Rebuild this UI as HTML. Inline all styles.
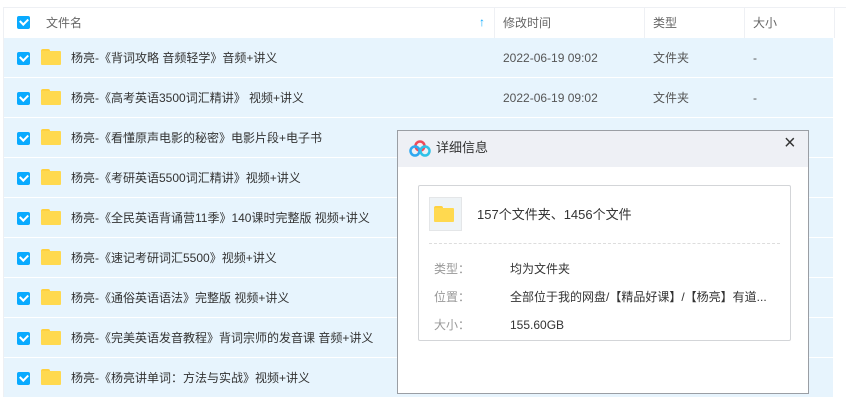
<!DOCTYPE html><html><head><meta charset="utf-8"><style>
*{margin:0;padding:0;box-sizing:border-box}
body{width:846px;height:408px;background:#fff;position:relative;overflow:hidden;font-family:"Liberation Sans","Noto Sans CJK SC",sans-serif;font-size:12px;line-height:16px;color:#333}
.a{position:absolute}
.hdr{left:4px;top:7px;width:842px;height:31px;border-top:1px solid #eef0f4;background:#fff;color:#666}
.row{position:absolute;left:4px;width:829px;height:39px;background:#e7f4fd}
.cb{position:absolute;width:13px;height:13px;background:#09aaff;border-radius:2px}
.cb:after{content:"";position:absolute;left:3px;top:2px;width:6px;height:4px;border-left:2px solid #fff;border-bottom:2px solid #fff;transform:rotate(-45deg)}
.fd{position:absolute;width:20px;height:16px}
.fd:before{content:"";position:absolute;left:0;top:0;width:9px;height:4px;background:#ffd13f;border-radius:2px 2px 0 0}
.fd:after{content:"";position:absolute;left:0;top:2px;width:20px;height:14px;background:#ffd94f;border-radius:1px}
.t{position:absolute;top:12px;white-space:nowrap}
.g{color:#555}
.sep{position:absolute;top:0;width:1px;height:30px;background:#eef0f4}
</style></head><body>
<div class="a" style="left:3px;top:7px;width:1px;height:390px;background:#eef0f4"></div>
<div class="a hdr">
<div class="cb" style="left:13px;top:8px"></div>
<div class="t" style="left:42px;top:7px">文件名</div>
<div class="a" style="left:475px;top:6px;color:#09aaff;font-weight:bold">↑</div>
<div class="sep" style="left:490px"></div>
<div class="t" style="left:499px;top:7px">修改时间</div>
<div class="sep" style="left:640px"></div>
<div class="t" style="left:649px;top:7px">类型</div>
<div class="sep" style="left:740px"></div>
<div class="t" style="left:749px;top:7px">大小</div>
<div class="sep" style="left:830px"></div>
</div>
<div class="row" style="top:38px"><div class="cb" style="left:13px;top:14px"></div><div class="fd" style="left:37px;top:11px"></div><div class="t" style="left:67px">杨亮-《背词攻略 音频轻学》音频+讲义</div><div class="t g" style="left:499px">2022-06-19 09:02</div><div class="t g" style="left:649px">文件夹</div><div class="t g" style="left:749px">-</div></div>
<div class="row" style="top:78px"><div class="cb" style="left:13px;top:14px"></div><div class="fd" style="left:37px;top:11px"></div><div class="t" style="left:67px">杨亮-《高考英语3500词汇精讲》 视频+讲义</div><div class="t g" style="left:499px">2022-06-19 09:02</div><div class="t g" style="left:649px">文件夹</div><div class="t g" style="left:749px">-</div></div>
<div class="row" style="top:118px"><div class="cb" style="left:13px;top:14px"></div><div class="fd" style="left:37px;top:11px"></div><div class="t" style="left:67px">杨亮-《看懂原声电影的秘密》电影片段+电子书</div></div>
<div class="row" style="top:158px"><div class="cb" style="left:13px;top:14px"></div><div class="fd" style="left:37px;top:11px"></div><div class="t" style="left:67px">杨亮-《考研英语5500词汇精讲》视频+讲义</div></div>
<div class="row" style="top:198px"><div class="cb" style="left:13px;top:14px"></div><div class="fd" style="left:37px;top:11px"></div><div class="t" style="left:67px">杨亮-《全民英语背诵营11季》140课时完整版 视频+讲义</div></div>
<div class="row" style="top:238px"><div class="cb" style="left:13px;top:14px"></div><div class="fd" style="left:37px;top:11px"></div><div class="t" style="left:67px">杨亮-《速记考研词汇5500》视频+讲义</div></div>
<div class="row" style="top:278px"><div class="cb" style="left:13px;top:14px"></div><div class="fd" style="left:37px;top:11px"></div><div class="t" style="left:67px">杨亮-《通俗英语语法》完整版 视频+讲义</div></div>
<div class="row" style="top:318px"><div class="cb" style="left:13px;top:14px"></div><div class="fd" style="left:37px;top:11px"></div><div class="t" style="left:67px">杨亮-《完美英语发音教程》背词宗师的发音课 音频+讲义</div></div>
<div class="row" style="top:358px"><div class="cb" style="left:13px;top:14px"></div><div class="fd" style="left:37px;top:11px"></div><div class="t" style="left:67px">杨亮-《杨亮讲单词：方法与实战》视频+讲义</div></div>

<div class="a" style="left:397px;top:130px;width:412px;height:264px;background:#fff;border:1px solid #9a9ea4">
<div class="a" style="left:0;top:0;width:410px;height:36px;background:#eef0f5"></div>
<svg class="a" style="left:11px;top:9px" width="22" height="17" viewBox="0 0 22 17"><circle cx="11" cy="6" r="4.5" fill="none" stroke="#f04a5a" stroke-width="2.5"/><circle cx="6" cy="11" r="4.5" fill="none" stroke="#2fa8f0" stroke-width="2.5"/><circle cx="16" cy="11" r="4.5" fill="none" stroke="#2fc2e8" stroke-width="2.5"/></svg>
<div class="a" style="left:38px;top:9px;font-size:13px;color:#333">详细信息</div>
<div class="a" style="left:386px;top:2px;font-size:20px;line-height:20px;color:#333">×</div>
<div class="a" style="left:20px;top:54px;width:373px;height:156px;border:1px solid #d3d5d8;border-radius:2px">
<div class="a" style="left:10px;top:11px;width:33px;height:34px;border:1px solid #e4e6e8;background:#eef3f6"></div>
<div class="fd" style="left:15px;top:20px;width:24px;height:18px"></div>
<div class="a" style="left:58px;top:21px;font-size:13px;color:#333">157个文件夹、1456个文件</div>
<div class="a" style="left:10px;top:57px;width:351px;border-top:1px dashed #ddd"></div>
<div class="a" style="left:15px;top:75px;color:#999">类型：</div><div class="a" style="left:91px;top:75px">均为文件夹</div>
<div class="a" style="left:15px;top:103px;color:#999">位置：</div><div class="a" style="left:91px;top:103px">全部位于我的网盘/【精品好课】/【杨亮】有道...</div>
<div class="a" style="left:15px;top:131px;color:#999">大小：</div><div class="a" style="left:91px;top:131px">155.60GB</div>
</div>
</div>
</body></html>
